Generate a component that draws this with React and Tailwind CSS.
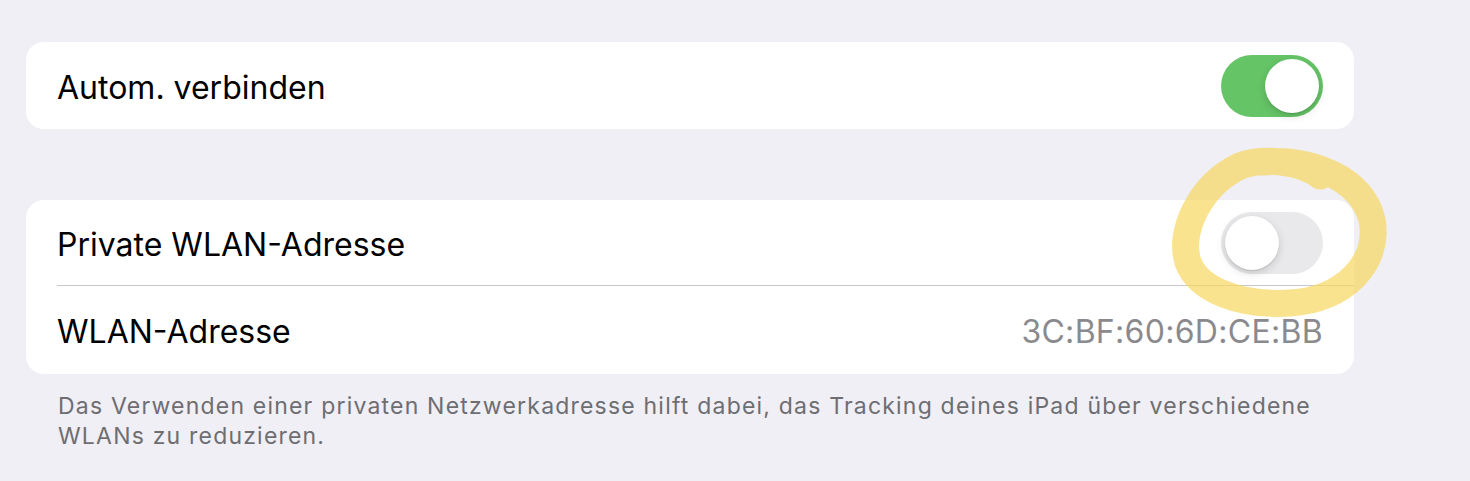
import React, { useState } from "react";

const font = { fontFamily: "Inter, 'Noto Sans', sans-serif" };

function Toggle({ on, onChange }) {
  return (
    <button
      onClick={() => onChange(!on)}
      className={`relative w-[102px] h-[62px] rounded-full shrink-0 transition-colors ${
        on ? "bg-[#65c466]" : "bg-[#e9e9eb]"
      }`}
    >
      <span
        className={`absolute top-[4px] w-[54px] h-[54px] rounded-full bg-white shadow-[0_3px_8px_rgba(0,0,0,0.15),0_1px_1px_rgba(0,0,0,0.12)] transition-all ${
          on ? "left-[44px]" : "left-[4px]"
        }`}
      />
    </button>
  );
}

export default function App() {
  const [autoJoin, setAutoJoin] = useState(true);
  const [privateAddr, setPrivateAddr] = useState(false);

  return (
    <div className="relative w-[1470px] h-[481px] bg-[#f0eff5] overflow-hidden" style={font}>
      <div className="pl-[26px] pt-[42px] w-[1354px]">
        {/* Autom. verbinden */}
        <div className="bg-white rounded-[18px] h-[87px] px-[31px] flex items-center justify-between">
          <span className="text-[32px] text-black pt-[4px]">Autom. verbinden</span>
          <Toggle on={autoJoin} onChange={setAutoJoin} />
        </div>

        {/* Private WLAN-Adresse */}
        <div className="mt-[71px] bg-white rounded-[18px] pl-[31px]">
          <div className="h-[86px] pr-[31px] flex items-center justify-between border-b border-[#c8c8cc]">
            <span className="text-[32px] text-black pt-[4px]">Private WLAN-Adresse</span>
            <Toggle on={privateAddr} onChange={setPrivateAddr} />
          </div>
          <div className="h-[88px] pr-[31px] flex items-center justify-between">
            <span className="text-[32px] text-black pt-[3px]">WLAN-Adresse</span>
            <span className="text-[32px] text-[#8a8a8e] tracking-[0.3px] pt-[3px]">3C:BF:60:6D:CE:BB</span>
          </div>
        </div>

        <p className="pl-[32px] pr-[20px] pt-[17px] text-[23px] leading-[30px] tracking-[1.2px] text-[#6d6d72]">
          Das Verwenden einer privaten Netzwerkadresse hilft dabei, das Tracking deines iPad über verschiedene WLANs zu reduzieren.
        </p>
      </div>

      {/* highlighter annotation */}
      <svg
        className="absolute left-0 top-0 pointer-events-none"
        width="1470"
        height="481"
        viewBox="0 0 1470 481"
      >
        <path
          d="M1262 162 C1310 158 1362 178 1372 220 C1380 262 1345 300 1290 303 C1240 306 1198 290 1188 262 C1178 232 1200 185 1240 166 C1262 158 1300 160 1320 176"
          fill="none"
          stroke="#f6d75e"
          strokeOpacity="0.7"
          strokeWidth="27"
          strokeLinecap="round"
          strokeLinejoin="round"
        />
      </svg>
    </div>
  );
}
